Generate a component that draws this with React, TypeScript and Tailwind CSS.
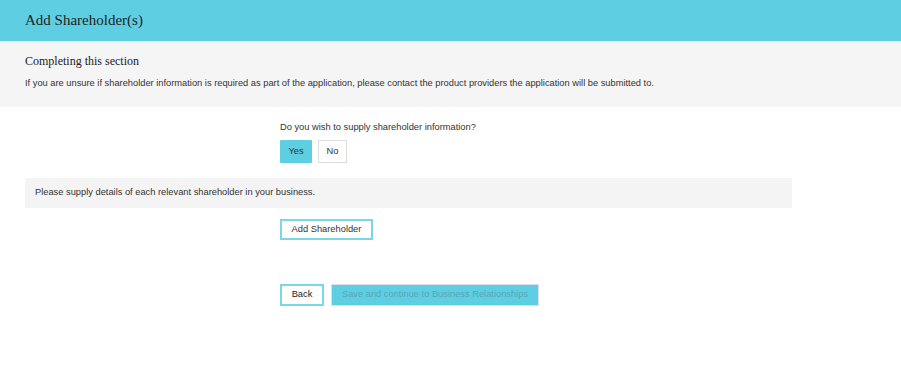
export default function App() {
    return (
        <div className="min-h-[379px] bg-white font-['Liberation_Sans',Arial,sans-serif] text-[#333]">
            <div className="flex h-[41px] items-center bg-[#5ecfe3] px-[25px]">
                <h1 className="font-['Liberation_Serif',serif] text-[15px] text-[#222]">
                    Add Shareholder(s)
                </h1>
            </div>
            <div className="h-[66px] bg-[#f5f5f5] px-[25px] pt-[12px]">
                <h2 className="font-['Liberation_Serif',serif] text-[12px] leading-[16px] text-[#222]">
                    Completing this section
                </h2>
                <p className="mt-[8px] text-[9.3px] leading-[12px] text-[#333]">
                    If you are unsure if shareholder information is required as part of the
                    application, please contact the product providers the application will be
                    submitted to.
                </p>
            </div>
            <div className="px-[25px] pt-[14px]">
                <div className="pl-[255px]">
                    <p className="text-[9.3px] leading-[12px] text-[#333]">
                        Do you wish to supply shareholder information?
                    </p>
                    <div className="mt-[7px] flex gap-[6px]">
                        <button className="h-[23px] w-[32px] rounded-[1px] bg-[#5ecfe3] text-[9.3px] text-[#333]">
                            Yes
                        </button>
                        <button className="h-[23px] w-[29px] border border-[#ddd] bg-white text-[9.3px] text-[#333]">
                            No
                        </button>
                    </div>
                </div>
                <div className="mt-[15px] flex h-[30px] w-[767px] items-center bg-[#f4f4f4] px-[10px]">
                    <p className="text-[9.3px] text-[#333]">
                        Please supply details of each relevant shareholder in your business.
                    </p>
                </div>
                <div className="pl-[255px]">
                    <button className="mt-[11px] h-[21px] w-[93px] border-2 border-[#79d7e8] bg-white text-[9.3px] text-[#333]">
                        Add Shareholder
                    </button>
                    <div className="mt-[44px] flex gap-[7px]">
                        <button className="h-[22px] w-[44px] border-2 border-[#79d7e8] bg-white text-[9.3px] text-[#222]">
                            Back
                        </button>
                        <button className="h-[22px] w-[208px] border border-[#dde] bg-[#5ecfe3] text-[9.3px] text-[#5aa5b4]">
                            Save and continue to Business Relationships
                        </button>
                    </div>
                </div>
            </div>
        </div>
    );
}
